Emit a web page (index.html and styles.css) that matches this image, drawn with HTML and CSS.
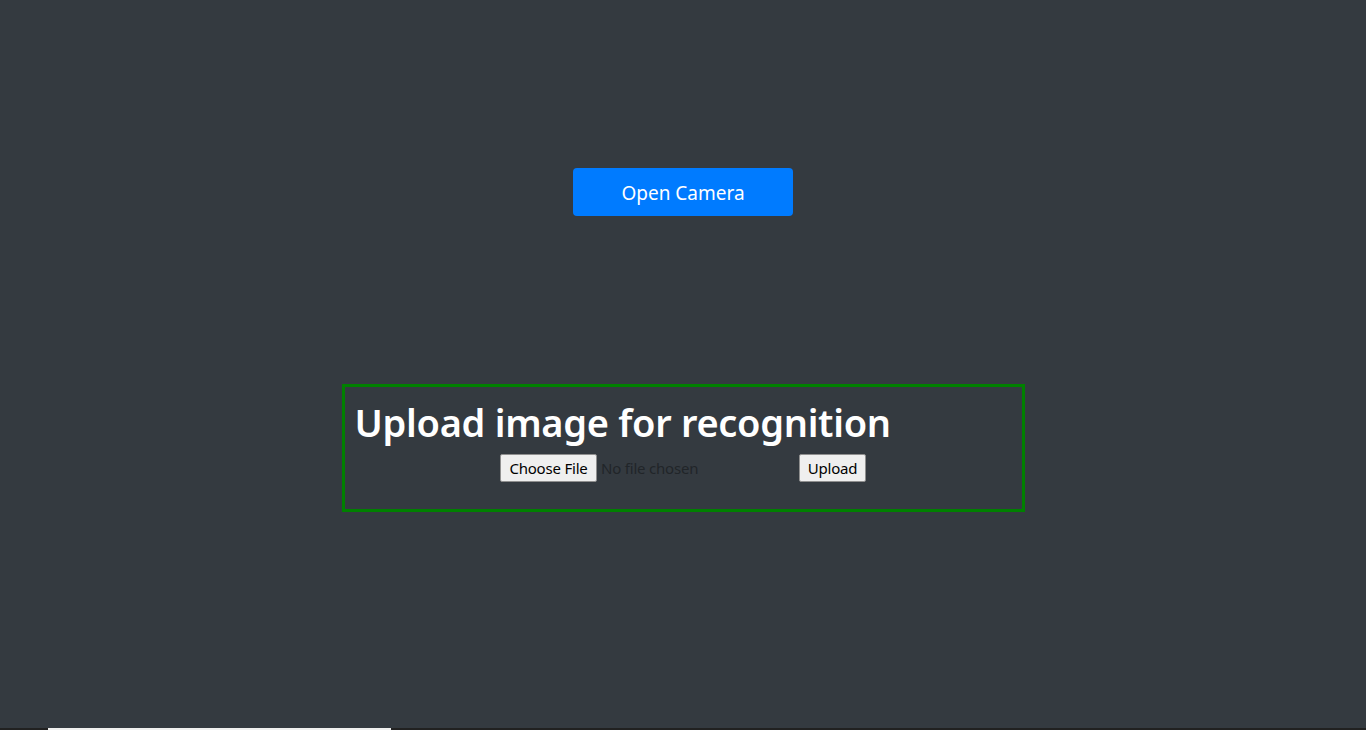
FILE: index.html
```html
<!DOCTYPE html>
<html lang="en">
<head>
<meta charset="utf-8">
<title>Recognition</title>
<link rel="stylesheet" href="styles.css">
</head>
<body>
<main class="page">
  <div class="camera-row">
    <button class="btn-camera" type="button">Open Camera</button>
  </div>
  <section class="upload-box">
    <h1 class="upload-title">Upload image for recognition</h1>
    <form class="upload-form">
      <label class="file-input">
        <span class="file-btn">Choose File</span>
        <span class="file-name">No file chosen</span>
      </label>
      <button class="upload-btn" type="button">Upload</button>
    </form>
  </section>
</main>
<div class="bottom-strip"><div class="bottom-bar"></div></div>
</body>
</html>
```
FILE: styles.css
```css
html, body {
  margin: 0;
  padding: 0;
  background: #343a40;
  overflow: hidden;
}
body {
  font-family: "Noto Sans", "Open Sans", sans-serif;
  color: #212529;
  font-size: 16px;
  line-height: 1.5;
}
.page {
  height: 728px;
  display: flex;
  flex-direction: column;
  align-items: center;
}
.camera-row {
  padding-top: 168px;
}
.btn-camera {
  width: 220px;
  height: 48px;
  padding: 2px 0 0 0;
  background: #007bff;
  color: #fff;
  border: none;
  border-radius: 4px;
  font-family: inherit;
  font-size: 19px;
  cursor: pointer;
}
.upload-box {
  margin-top: 168px;
  width: 683px;
  box-sizing: border-box;
  border: 3px solid #008000;
  padding: 11px 10px 27px 10px;
}
.upload-title {
  margin: 0 0 8px 0;
  font-size: 38px;
  font-weight: 600;
  line-height: 48px;
  color: #fff;
  letter-spacing: -0.3px;
}
.upload-form {
  display: flex;
  justify-content: center;
  align-items: center;
  gap: 4px;
  height: 28px;
}
.file-input {
  display: flex;
  align-items: center;
  width: 295px;
}
.file-btn, .upload-btn {
  box-sizing: border-box;
  height: 28px;
  display: inline-flex;
  align-items: center;
  padding: 0 7px;
  background: #efefef;
  border: 1px solid #8f8f8f;
  border-radius: 2px;
  font-family: inherit;
  font-size: 15px;
  color: #000;
  letter-spacing: -0.2px;
}
.file-btn {
  width: 97px;
  justify-content: center;
}
.upload-btn {
  width: 67px;
  justify-content: center;
}
.file-name {
  margin-left: 4px;
  font-size: 15px;
  color: #212529;
  letter-spacing: -0.2px;
}
.bottom-strip {
  height: 2px;
  background: #212121;
}
.bottom-bar {
  margin-left: 48px;
  width: 343px;
  height: 2px;
  background: #f0f0f0;
}
```
